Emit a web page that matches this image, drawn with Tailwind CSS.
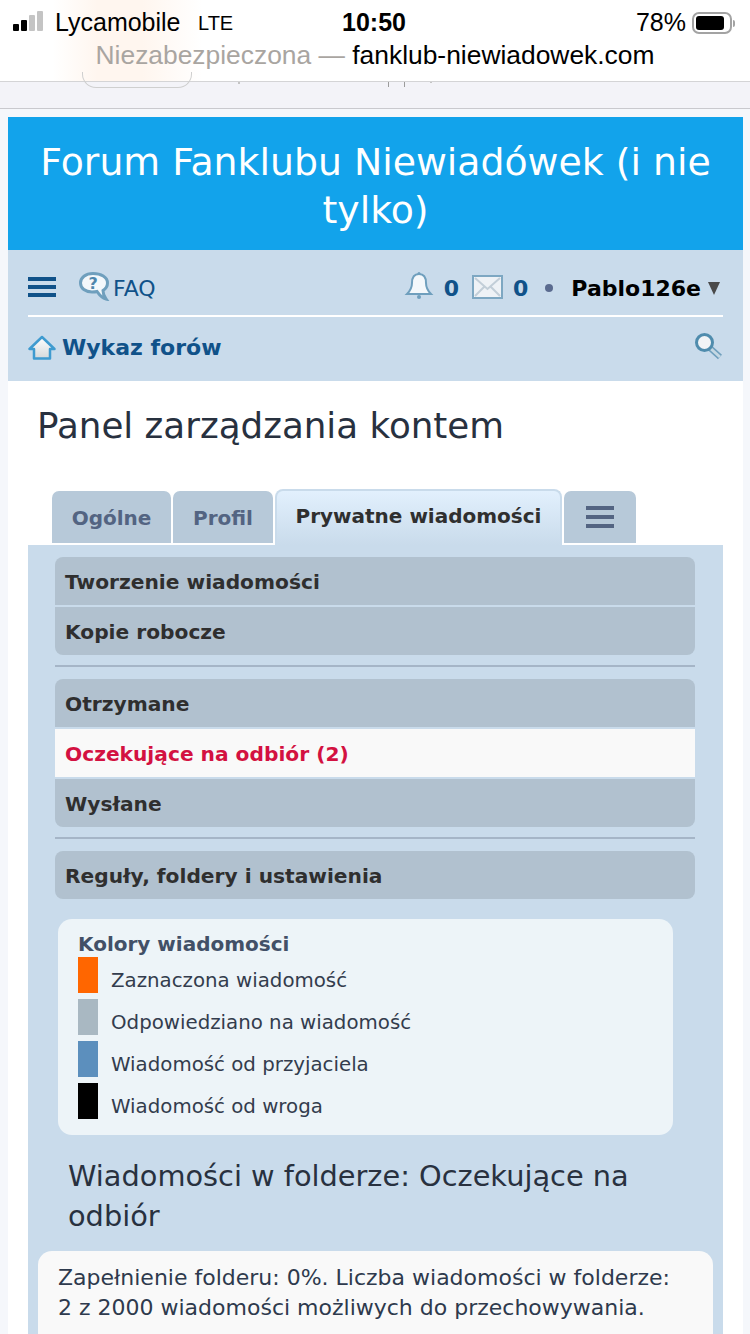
<!DOCTYPE html>
<html lang="pl">
<head>
  <meta charset="UTF-8">
  <meta name="viewport" content="width=device-width, initial-scale=1.0">
  <title>Panel zarządzania kontem</title>
  <script src="https://cdn.jsdelivr.net/npm/@tailwindcss/browser@4"></script>
</head>
<body class="bg-[#f5f7fb] font-['DejaVu_Sans',sans-serif] w-[750px] h-[1334px] overflow-hidden">

  <!-- browser chrome -->
  <div class="h-[82px] border-b border-[#d4d4d6] bg-[linear-gradient(90deg,#ffffff_7%,#fff6ef_13%,#fff6ef_19%,#ffffff_27%)] font-['Liberation_Sans',sans-serif] text-black">
    <div class="h-[44px] flex items-center pl-[13px] pr-[15px] pt-[2px] text-[25px]">
      <div class="flex items-end gap-[2px] w-[42px] h-[20px] mb-[4px]">
        <span class="w-[6px] h-[7px] bg-black rounded-[1px]"></span>
        <span class="w-[6px] h-[11px] bg-black rounded-[1px]"></span>
        <span class="w-[6px] h-[16px] bg-[#c4c4c4] rounded-[1px]"></span>
        <span class="w-[6px] h-[20px] bg-[#c4c4c4] rounded-[1px]"></span>
      </div>
      <span class="w-[125px]">Lycamobile</span>
      <span class="ml-[18px] w-[144px] text-[20px]">LTE</span>
      <span class="font-bold">10:50</span>
      <span class="ml-auto">78%</span>
      <div class="ml-[6px] flex items-center">
        <div class="w-[40px] h-[22px] border-2 border-[#a3a3a3] rounded-[7px] p-[2px]">
          <div class="w-[28px] h-full bg-black rounded-[3px]"></div>
        </div>
        <span class="w-[2px] h-[7px] bg-[#a3a3a3] rounded-r-sm ml-[1px]"></span>
      </div>
    </div>
    <div class="text-center text-[26.4px] leading-[22px]">
      <span class="text-[#a9a5a1]">Niezabezpieczona —</span> fanklub-niewiadowek.com
    </div>
  </div>

  <!-- page cut off under the address bar -->
  <div class="relative h-[27px] bg-[#f3f3f8] border-b border-[#c9c9ce]">
    <div class="absolute left-[82px] top-[-10px] w-[110px] h-[16px] border border-t-0 border-[#cfcfcf] rounded-b-[14px]"></div>
    <div class="absolute left-[238px] top-0 w-[2px] h-[2px] bg-[#c4c4c4]"></div>
    <div class="absolute left-[388px] top-0 w-[1px] h-[5px] bg-[#9b9b9b]"></div>
    <div class="absolute left-[404px] top-0 w-[1px] h-[5px] bg-[#9b9b9b]"></div>
    <div class="absolute left-[430px] top-0 w-[2px] h-[1px] bg-[#c4c4c4]"></div>
  </div>

  <div class="mx-[8px] mt-[8px] w-[735px] bg-white">
    <header class="h-[133px] bg-[#12a3eb] pt-[21px] px-[20px] text-center text-white text-[37.800px] leading-[48px]">
      Forum Fanklubu Niewiadówek (i nie tylko)
    </header>

    <nav class="h-[131px] bg-[#c9dbeb] px-[20px]">
      <div class="h-[67px] pt-[7px] flex items-center border-b-2 border-white text-[#105289]">
        <div class="flex flex-col gap-[4px] w-[28px] mt-[2px]">
          <span class="h-[4px] bg-[#105289]"></span>
          <span class="h-[4px] bg-[#105289]"></span>
          <span class="h-[4px] bg-[#105289]"></span>
        </div>
        <svg class="ml-[22px]" width="32" height="30" viewBox="0 0 32 30">
          <path d="M15 2.500C7.500 2.500 2.500 6.500 2.500 12c0 5.500 5 9 11.500 9 2 0 3.500 0 5-.5 1.500 2 3.500 6 9 7.500-1.500-2-3-5.500-3-8.500 3-2 4.500-4.500 4.500-7.500C29.500 6 23 2.500 15 2.500z" fill="#f4f8fb" stroke="#6f9fbd" stroke-width="3"/>
          <text x="10.500" y="18" font-size="16" font-weight="700" fill="#4f87ad" font-family="DejaVu Sans">?</text>
        </svg>
        <span class="ml-[3px] mt-[5px] text-[22px] font-normal">FAQ</span>
        <svg class="ml-auto" width="30" height="30" viewBox="0 0 30 30">
          <path d="M15 3c-5 0-7 4-7 9 0 5-2 8-5 11h24c-3-3-5-6-5-11 0-5-2-9-7-9z" fill="#f4f8fb" stroke="#6f9fbd" stroke-width="2"/>
          <circle cx="15" cy="26" r="2" fill="#6f9fbd"/>
          <circle cx="15" cy="2.500" r="1.500" fill="#6f9fbd"/>
        </svg>
        <span class="ml-[10px] mt-[5px] text-[22px] font-bold">0</span>
        <svg class="ml-[13px] mt-[2px]" width="31" height="24" viewBox="0 0 31 24">
          <rect x="1" y="1" width="29" height="22" fill="#eef2f6" stroke="#7da7c2" stroke-width="2"/>
          <path d="M3 3l12.500 11L28 3M3 21l9-9M28 21l-9-9" fill="none" stroke="#c2ced8" stroke-width="2"/>
        </svg>
        <span class="ml-[10px] mt-[5px] text-[22px] font-bold">0</span>
        <span class="ml-[17px] mt-[3px] w-[8px] h-[8px] rounded-full bg-[#5a6b8f]"></span>
        <span class="ml-[18px] mt-[5px] text-[22px] font-bold text-black">Pablo126e</span>
        <span class="ml-[7px] mt-[5px] mr-[3px] w-0 h-0 border-x-[6px] border-t-[13px] border-x-transparent border-t-[#4a4a4a]"></span>
      </div>
      <div class="h-[61px] flex items-center">
        <svg width="28" height="26" viewBox="0 0 28 26">
          <defs>
            <linearGradient id="roof" x1="0" y1="0" x2="0" y2="1">
              <stop offset="0" stop-color="#ffffff"/>
              <stop offset="1" stop-color="#d5d9db"/>
            </linearGradient>
          </defs>
          <path d="M14 2L1.500 14H6v9.500h16V14h4.500z" fill="url(#roof)" stroke="#3f9bd0" stroke-width="2.500" stroke-linejoin="round"/>
        </svg>
        <span class="ml-[6px] text-[22px] font-bold text-[#105289]">Wykaz forów</span>
        <svg class="ml-auto mt-[-3px] mr-[-1px]" width="30" height="28" viewBox="0 0 30 28">
          <path d="M16 16l10 9" stroke="#6f9fbd" stroke-width="6"/>
          <path d="M16 16l10 9" stroke="#c5d8e3" stroke-width="3"/>
          <circle cx="10.500" cy="10.500" r="8" fill="#f1f4f6" stroke="#4f8cad" stroke-width="3"/>
        </svg>
      </div>
    </nav>

    <div class="px-[20px]">
      <h1 class="pt-[21px] pl-[9px] h-[110px] text-[35.700px] leading-[48px] font-normal text-[#28313f]">Panel zarządzania kontem</h1>

      <div class="h-[54px] ml-[24px] flex items-end gap-[2px] text-[20px] font-bold">
        <div class="w-[119px] h-[52px] pt-[2px] bg-[#b7c9d9] rounded-t-[7px] mb-[2px] flex items-center justify-center text-[#536482]">Ogólne</div>
        <div class="w-[100px] h-[52px] pt-[2px] bg-[#b7c9d9] rounded-t-[7px] mb-[2px] flex items-center justify-center text-[#536482]">Profil</div>
        <div class="w-[287px] h-[56px] bg-[linear-gradient(#e2f0fd,#c9dbeb)] border-2 border-b-0 border-[#c9dbeb] rounded-t-[8px] flex items-center justify-center pb-[5px] text-[#2f2f2f]">Prywatne wiadomości</div>
        <div class="w-[72px] h-[52px] bg-[#b7c9d9] rounded-t-[7px] mb-[2px] flex flex-col items-center justify-center gap-[5px]">
          <span class="w-[28px] h-[4px] bg-[#536482]"></span>
          <span class="w-[28px] h-[4px] bg-[#536482]"></span>
          <span class="w-[28px] h-[4px] bg-[#536482]"></span>
        </div>
      </div>

      <main class="h-[789px] overflow-hidden bg-[#c9dbeb] pt-[12px]">
        <ul class="ml-[27px] mr-[28px] text-[20.200px] font-bold text-[#2f2f2f]">
          <li class="h-[48px] pt-[2px] flex items-center pl-[10px] bg-[#b1c1cf] rounded-t-[8px]">Tworzenie wiadomości</li>
          <li class="h-[48px] pt-[2px] mt-[2px] flex items-center pl-[10px] bg-[#b1c1cf] rounded-b-[8px]">Kopie robocze</li>
          <li class="h-[2px] mt-[10px] mb-[12px] bg-[#a5b5c7]"></li>
          <li class="h-[48px] pt-[2px] flex items-center pl-[10px] bg-[#b1c1cf] rounded-t-[8px]">Otrzymane</li>
          <li class="h-[48px] pt-[2px] mt-[2px] flex items-center pl-[10px] bg-[#f9f9f9] text-[#d31141]">Oczekujące na odbiór (2)</li>
          <li class="h-[48px] pt-[2px] mt-[2px] flex items-center pl-[10px] bg-[#b1c1cf] rounded-b-[8px]">Wysłane</li>
          <li class="h-[2px] mt-[10px] mb-[12px] bg-[#a5b5c7]"></li>
          <li class="h-[48px] pt-[2px] flex items-center pl-[10px] bg-[#b1c1cf] rounded-[8px]">Reguły, foldery i ustawienia</li>
        </ul>

        <section class="ml-[30px] mt-[20px] w-[615px] h-[216px] bg-[#edf4f8] rounded-[14px] pt-[13px] pl-[20px] text-[19.800px] text-[#333c4d]">
          <h3 class="h-[25px] leading-[24px] text-[20px] font-bold text-[#425067]">Kolory wiadomości</h3>
          <div class="flex flex-col gap-[6px]">
            <div class="flex items-center h-[36px]"><span class="w-[20px] h-[36px] bg-[#ff6600]"></span><span class="ml-[13px] mt-[12px]">Zaznaczona wiadomość</span></div>
            <div class="flex items-center h-[36px]"><span class="w-[20px] h-[36px] bg-[#a9b8c2]"></span><span class="ml-[13px] mt-[12px]">Odpowiedziano na wiadomość</span></div>
            <div class="flex items-center h-[36px]"><span class="w-[20px] h-[36px] bg-[#5c8fbd]"></span><span class="ml-[13px] mt-[12px]">Wiadomość od przyjaciela</span></div>
            <div class="flex items-center h-[36px]"><span class="w-[20px] h-[36px] bg-black"></span><span class="ml-[13px] mt-[12px]">Wiadomość od wroga</span></div>
          </div>
        </section>

        <h2 class="mt-[21px] ml-[40px] mr-[60px] text-[28.800px] leading-[40px] font-normal text-[#28313f]">Wiadomości w folderze: Oczekujące na odbiór</h2>

        <section class="mt-[15px] mx-[10px] h-[200px] bg-[#f9f9f9] rounded-t-[14px] pt-[12px] pl-[20px] text-[22px] leading-[30px] text-[#2e3a4d]">
          Zapełnienie folderu: 0%. Liczba wiadomości w folderze:<br>2 z 2000 wiadomości możliwych do przechowywania.
        </section>
      </main>
    </div>
  </div>

</body>
</html>
